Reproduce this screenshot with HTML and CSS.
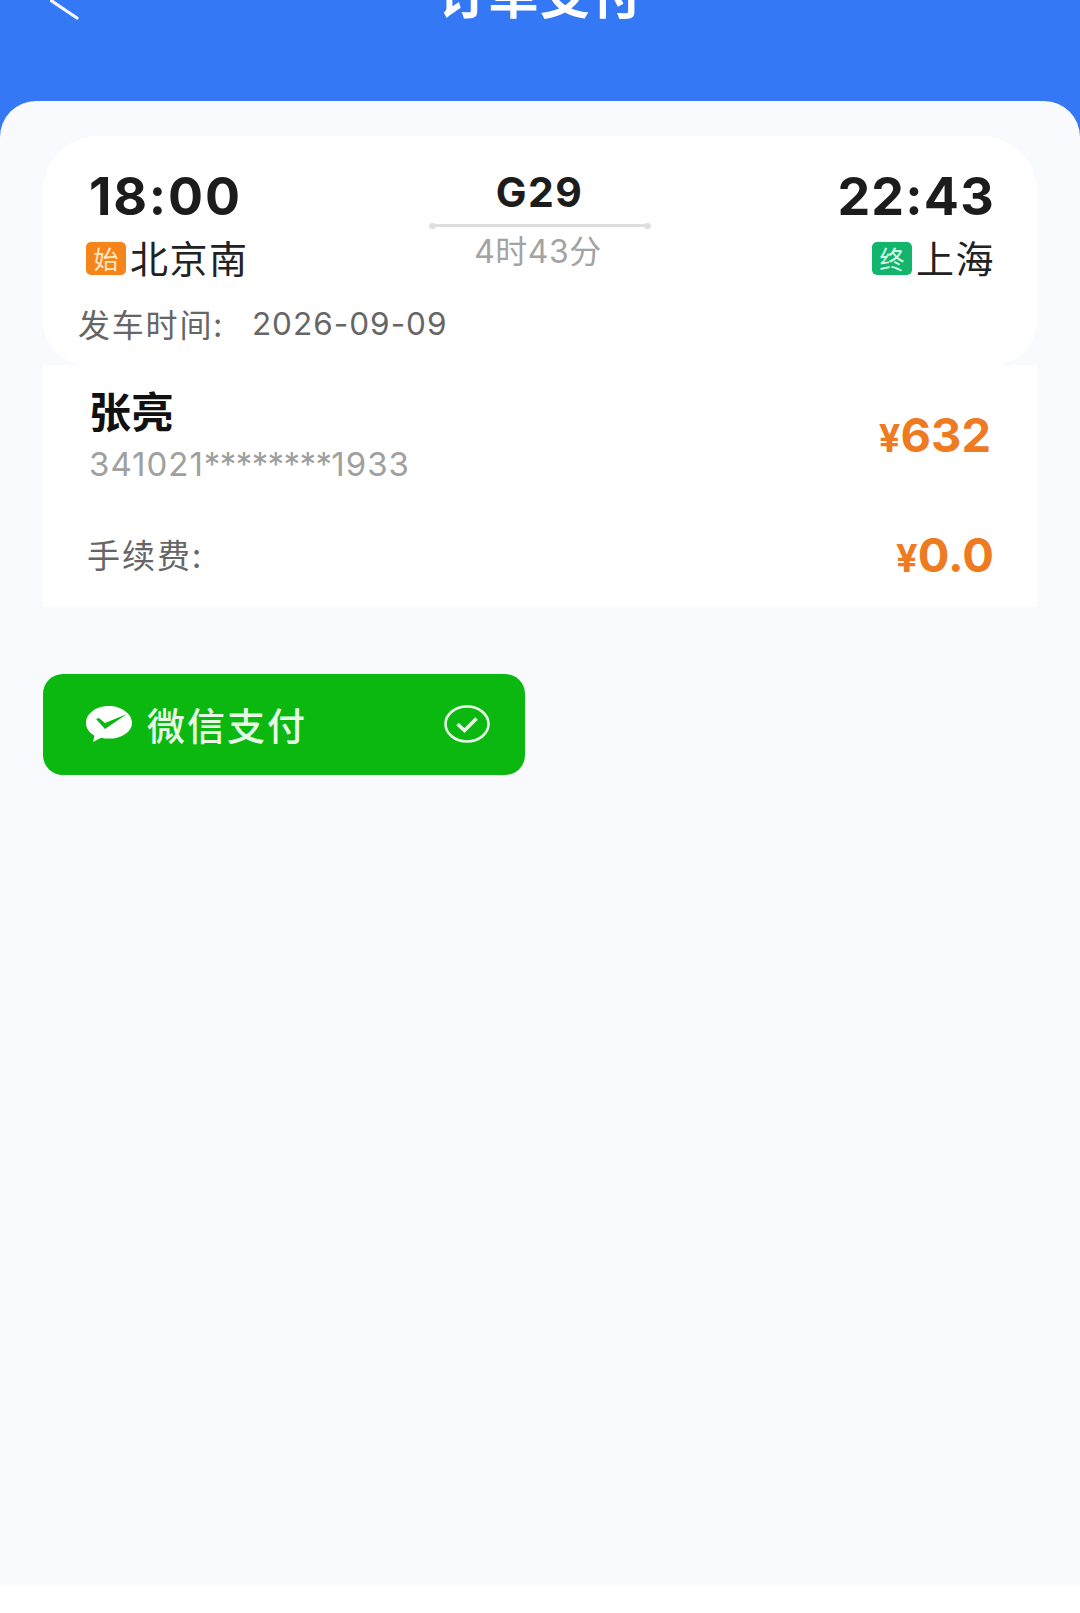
FILE: index.html
```html
<!DOCTYPE html>
<html lang="zh-CN">
<head>
<meta charset="utf-8">
<title>订单支付</title>
<link rel="stylesheet" href="styles.css">
</head>
<body>
<div class="page">
  <header class="header">
    <svg class="back" width="30" height="22" viewBox="0 0 30 22"><path d="M-2 -1.500 L27 18" fill="none" stroke="#f4f7ff" stroke-width="3.200" stroke-linecap="round"/></svg>
    <div class="title">订单支付</div>
  </header>
  <main class="panel">
    <section class="trip">
      <div class="trip-row">
        <div class="end">
          <div class="time">18:00</div>
          <div class="station"><span class="tag tag-start">始</span><span class="station-name">北京南</span></div>
        </div>
        <div class="mid">
          <div class="train">G29</div>
          <div class="line"></div>
          <div class="dur">4时43分</div>
        </div>
        <div class="end end-right">
          <div class="time">22:43</div>
          <div class="station"><span class="tag tag-end">终</span><span class="station-name">上海</span></div>
        </div>
      </div>
      <div class="date"><span>发车时间:</span><span class="date-val">2026-09-09</span></div>
    </section>
    <section class="fare">
      <div class="person">
        <div>
          <div class="name">张亮</div>
          <div class="idno">341021<span class="mask">********</span>1933</div>
        </div>
        <div class="price"><span class="yen">¥</span>632</div>
      </div>
      <div class="fee">
        <div class="fee-label">手续费:</div>
        <div class="price price-fee"><span class="yen">¥</span>0.0</div>
      </div>
    </section>
    <div class="pay">
      <div class="pay-left">
        <svg width="48" height="38" viewBox="0 0 48 38"><path d="M24 1C11.300 1 1 8.500 1 18c0 5.200 3.300 9.800 8.500 12.800L8 37l8-4.300c2.600.6 5.200.9 8 .9 12.700 0 23-7 23-15.700S36.700 1 24 1z" fill="#fff"/><path d="M11 14l3-1 6 5L42 9 20 24z" fill="#0bb80f"/></svg>
        <span class="pay-name">微信支付</span>
      </div>
      <svg class="check" width="46" height="38" viewBox="0 0 46 38"><ellipse cx="23" cy="19" rx="21.500" ry="17.500" fill="none" stroke="#e6f8e6" stroke-width="2.600"/><path d="M13.500 19l7 6.500 12-12" fill="none" stroke="#e6f8e6" stroke-width="3.500"/></svg>
    </div>
  </main>
</div>
</body>
</html>
```
FILE: styles.css
```css
* { box-sizing: border-box; }
html, body { margin: 0; padding: 0; background: #fff; }
body { font-family: "Inter", "Noto Sans CJK SC", sans-serif; }
.page { width: 1080px; height: 1613px; overflow: hidden; display: flex; flex-direction: column; background: #fff; }
.header { height: 137px; flex: none; background: #3478f6; position: relative; display: flex; justify-content: center; overflow: hidden; margin-bottom: -36px; }
.back { position: absolute; left: 50px; top: 0; }
.title { font-family: "Noto Sans CJK SC", sans-serif; font-weight: 700; font-size: 50px; line-height: 60px; letter-spacing: 1.500px; color: #fff; margin-top: -38px; }
.panel { height: 1484px; flex: none; background: #f8fafd; border-radius: 36px 36px 0 0; padding: 35px 43px 0; position: relative; }
.trip { height: 229px; background: #fff; border-radius: 55px 55px 45px 45px; padding: 0 44px 0 45px; position: relative; }
.trip-row { display: flex; justify-content: space-between; padding-top: 35px; }
.end { width: 240px; display: flex; flex-direction: column; }
.end-right { align-items: flex-end; }
.time { font-weight: 700; font-size: 52px; line-height: 52px; color: #1c1c1c; letter-spacing: 1.800px; margin-left: 1px; }
.end-right .time { letter-spacing: 1.200px; margin-right: -2px; }
.station { display: flex; align-items: center; gap: 4px; margin-top: 19px; font-family: "Noto Sans CJK SC", sans-serif; font-size: 38px; line-height: 36px; letter-spacing: 1.500px; color: #222; margin-left: -2px; }
.station-name { margin-top: -4px; }
.tag { width: 40px; height: 33px; border-radius: 5px; color: #fff; font-size: 25px; line-height: 33px; letter-spacing: 0; text-align: center; flex: none; }
.tag-start { background: #f5841a; color: #ffe9c8; }
.tag-end { background: #13b56c; color: #d9ffe9; }
.end-right .station { margin-right: -2px; }
.mid { width: 220px; display: flex; flex-direction: column; align-items: center; margin-left: -2px; }
.train { font-weight: 700; font-size: 41px; line-height: 46px; color: #1c1c1c; letter-spacing: 1.500px; margin-top: -2px; }
.line { width: 220px; height: 3px; margin-top: 9px; border-radius: 2px; background: #dedede; position: relative; }
.line::before, .line::after { content: ""; position: absolute; top: -1.500px; width: 7px; height: 6px; border-radius: 50%; background: #dedede; }
.line::before { left: -1px; }
.line::after { right: -1px; }
.dur { font-family: "Inter", "Noto Sans CJK SC", sans-serif; font-size: 32px; line-height: 36px; letter-spacing: 0.500px; color: #a3a3a3; margin-top: 7px; margin-left: -3px; }
.date { font-family: "Noto Sans CJK SC", sans-serif; font-size: 32px; line-height: 38px; color: #666; margin: 29px 0 0 -10px; letter-spacing: 1.800px; display: flex; }
.date-val { font-family: "Inter", sans-serif; font-size: 31.500px; letter-spacing: 1px; margin-left: 28px; margin-top: 1px; }
.fare { height: 242px; background: #fff; padding: 0 44px 0 46px; }
.person { display: flex; justify-content: space-between; align-items: center; height: 139px; padding-top: 6px; }
.name { font-family: "Noto Sans CJK SC", sans-serif; font-weight: 700; font-size: 42px; line-height: 44px; letter-spacing: 0.500px; color: #111; margin-top: -5px; }
.idno { font-family: "Inter", sans-serif; font-size: 33px; line-height: 38px; color: #a0a0a0; margin-top: 13px; letter-spacing: 1px; }
.mask { letter-spacing: -0.600px; }
.price { font-weight: 700; font-size: 47px; line-height: 50px; color: #ee7a22; margin-top: -2px; margin-right: 2px; }
.yen { font-size: 38px; margin-right: 0; }
.price-fee { margin-top: 0; margin-right: -1px; }
.fee { display: flex; justify-content: space-between; align-items: center; height: 50px; margin-top: 27px; }
.fee-label { font-family: "Noto Sans CJK SC", sans-serif; font-size: 33px; line-height: 40px; color: #666; letter-spacing: 2px; margin: -4px 0 0 -2px; }
.pay { margin-top: 67px; width: 482px; height: 101px; border-radius: 20px; background: #0bb80f; display: flex; justify-content: space-between; align-items: center; padding: 0 35px 2px 42px; }
.pay-left { display: flex; align-items: center; gap: 14px; }
.pay-name { font-family: "Noto Sans CJK SC", sans-serif; font-weight: 500; font-size: 38px; line-height: 46px; letter-spacing: 2px; color: #e6f8e6; }
```
